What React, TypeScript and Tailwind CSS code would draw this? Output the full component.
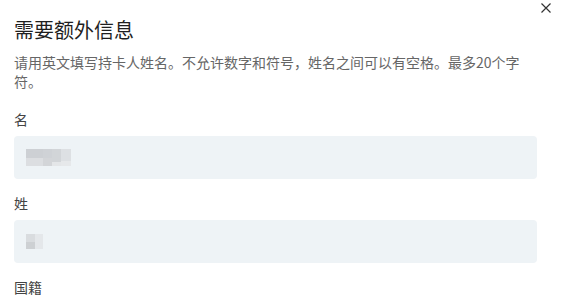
import React from 'react';

const font = { fontFamily: '"Noto Sans CJK SC", "Noto Sans", sans-serif' };

const BlurFirst: React.FC = () => (
  <div className="flex h-[17px]">
    <div className="flex flex-col w-[17px]">
      <div className="h-[9px] bg-[#cdd0d4]" />
      <div className="h-[8px] bg-[#dcdee1]" />
    </div>
    <div className="flex flex-col w-[9px]">
      <div className="h-[9px] bg-[#cfd2d6]" />
      <div className="h-[8px] bg-[#d3d5d8]" />
    </div>
    <div className="flex flex-col w-[9px]">
      <div className="h-[13px] bg-[#d2d5d8]" />
      <div className="h-[4px] bg-[#e4e6e8]" />
    </div>
    <div className="flex flex-col w-[10px]">
      <div className="h-[12px] bg-[#dde0e3]" />
      <div className="h-[5px] bg-[#e6e8ea]" />
    </div>
  </div>
);

const BlurSecond: React.FC = () => (
  <div className="flex h-[15px]">
    <div className="flex flex-col w-[9px]">
      <div className="h-[8px] bg-[#d9dcdf]" />
      <div className="h-[7px] bg-[#cdd0d3]" />
    </div>
    <div className="w-[8px] bg-[#e4e7ea]" />
  </div>
);

const Field: React.FC<{ label: string; children?: React.ReactNode; first?: boolean }> = ({ label, children, first }) => (
  <div className={first ? 'mt-[18px]' : 'mt-[14px]'}>
    <div className="text-[14px] leading-5 text-[#444]">{label}</div>
    <div className="mt-[7px] h-[43px] rounded-[4px] bg-[#eef3f6] flex items-center pl-[12px]">{children}</div>
  </div>
);

export default function App() {
  return (
    <div className="relative w-[565px] h-[299px] overflow-hidden bg-white pl-[14px] pr-[28px]" style={font}>
      <button className="absolute top-[3px] left-[541px] w-[10px] h-[10px]">
        <svg viewBox="0 0 10 10" width="10" height="10">
          <path d="M0.5 0.5 L9.5 9.5 M9.5 0.5 L0.5 9.5" stroke="#333" strokeWidth="1.2" fill="none" />
        </svg>
      </button>

      <h2 className="mt-4 text-[20px] leading-[28px] text-[#1f1f1f] font-normal">需要额外信息</h2>
      <p className="mt-[9px] max-w-[508px] text-[14px] leading-[19px] text-[#666]">
        请用英文填写持卡人姓名。不允许数字和符号，姓名之间可以有空格。最多20个字符。
      </p>

      <Field label="名" first>
        <BlurFirst />
      </Field>
      <Field label="姓">
        <BlurSecond />
      </Field>
      <div className="mt-[14px] text-[14px] leading-5 text-[#444]">国籍</div>
    </div>
  );
}
